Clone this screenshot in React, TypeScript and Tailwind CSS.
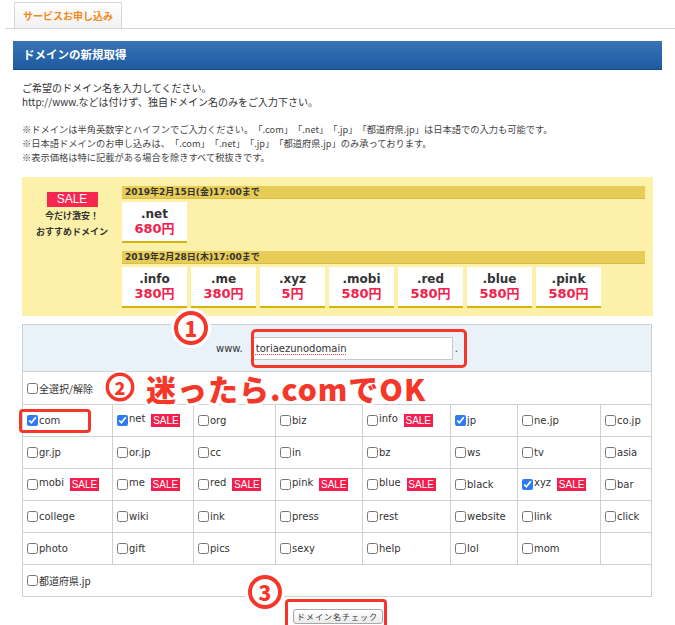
import React from 'react';

type Tld = { name: string; checked?: boolean; sale?: boolean };

const rows: Tld[][] = [
  [
    { name: 'com', checked: true },
    { name: 'net', checked: true, sale: true },
    { name: 'org' },
    { name: 'biz' },
    { name: 'info', sale: true },
    { name: 'jp', checked: true },
    { name: 'ne.jp' },
    { name: 'co.jp' },
  ],
  [
    { name: 'gr.jp' },
    { name: 'or.jp' },
    { name: 'cc' },
    { name: 'in' },
    { name: 'bz' },
    { name: 'ws' },
    { name: 'tv' },
    { name: 'asia' },
  ],
  [
    { name: 'mobi', sale: true },
    { name: 'me', sale: true },
    { name: 'red', sale: true },
    { name: 'pink', sale: true },
    { name: 'blue', sale: true },
    { name: 'black' },
    { name: 'xyz', checked: true, sale: true },
    { name: 'bar' },
  ],
  [
    { name: 'college' },
    { name: 'wiki' },
    { name: 'ink' },
    { name: 'press' },
    { name: 'rest' },
    { name: 'website' },
    { name: 'link' },
    { name: 'click' },
  ],
  [
    { name: 'photo' },
    { name: 'gift' },
    { name: 'pics' },
    { name: 'sexy' },
    { name: 'help' },
    { name: 'lol' },
    { name: 'mom' },
    { name: '' },
  ],
];

const saleCards = [
  { tld: '.info', price: '380円' },
  { tld: '.me', price: '380円' },
  { tld: '.xyz', price: '5円' },
  { tld: '.mobi', price: '580円' },
  { tld: '.red', price: '580円' },
  { tld: '.blue', price: '580円' },
  { tld: '.pink', price: '580円' },
];

const Card = ({ tld, price }: { tld: string; price: string }) => (
  <div className="flex h-[41px] w-[65px] flex-col items-center border-b-2 border-[#d9b20a] bg-white pt-[5px] font-['DejaVu_Sans','Noto_Sans_CJK_JP',sans-serif] font-bold">
    <span className="text-[12px] leading-[14px] text-[#333]">{tld}</span>
    <span className="text-[13px] leading-[16px] text-[#f2224b]">{price}</span>
  </div>
);

const DateBar = ({ children }: { children: React.ReactNode }) => (
  <div className="h-[13px] border-b border-[#d9bc45] bg-[#e8cc58] pl-[3px] font-['DejaVu_Sans','Noto_Sans_CJK_JP',sans-serif] text-[9px] font-bold leading-[13px] text-[#333]">
    {children}
  </div>
);

const Check = ({ checked }: { checked?: boolean }) => (
  <input
    type="checkbox"
    defaultChecked={checked}
    className="m-0 mr-px h-[11px] w-[11px] shrink-0 accent-[#2f7bf5]"
  />
);

const Circle = ({ n, className }: { n: string; className: string }) => (
  <div className={`absolute flex items-center justify-center rounded-full bg-white ${className}`}>
    <div className="flex h-[34px] w-[34px] items-center justify-center rounded-full border-[4px] border-[#f5372a] font-['Noto_Sans_CJK_JP',sans-serif] text-[21px] font-black leading-none text-[#f5372a]">
      {n}
    </div>
  </div>
);

export default function App() {
  return (
    <div className="relative h-[625px] w-[675px] overflow-hidden bg-white font-['Noto_Sans_CJK_JP',sans-serif] text-[#333] [text-spacing-trim:space-all]">
      {/* tab */}
      <div className="ml-[5px] flex h-[29px] items-end border-b border-[#d6d6d6]">
        <div className="ml-[9px] flex h-[26px] w-[108px] items-center justify-center border border-b-0 border-[#d6d6d6] bg-gradient-to-b from-white to-[#f2f2f2] text-[10px] font-bold text-[#f28a1e]">
          サービスお申し込み
        </div>
      </div>

      {/* header */}
      <div className="ml-[13px] mt-[12px] flex h-[29px] w-[649px] items-center border-b border-[#14498a] bg-gradient-to-b from-[#3874b6] to-[#1d5aa0] pl-[10px] text-[11.5px] font-bold text-white">
        ドメインの新規取得
      </div>

      <div className="ml-[22px] mt-[11px] text-[10px] leading-[14px]">
        <p>ご希望のドメイン名を入力してください。</p>
        <p>http://www.などは付けず、独自ドメイン名のみをご入力下さい。</p>
      </div>

      <div className="ml-[22px] mt-[13px] text-[9.25px] leading-[14px] text-[#444]">
        <p>※ドメインは半角英数字とハイフンでご入力ください。「.com」「.net」「.jp」「都道府県.jp」は日本語での入力も可能です。</p>
        <p>※日本語ドメインのお申し込みは、「.com」「.net」「.jp」「都道府県.jp」のみ承っております。</p>
        <p>※表示価格は特に記載がある場合を除きすべて税抜きです。</p>
      </div>

      {/* sale box */}
      <div className="ml-[22px] mt-[13px] flex h-[139px] w-[631px] bg-[#fdf0a9] pt-[9px]">
        <div className="flex w-[100px] flex-col items-center pt-[6px]">
          <div className="h-[15px] w-[51px] bg-[#f8274f] text-center font-['Liberation_Sans',sans-serif] text-[12px] leading-[15px] text-white">
            SALE
          </div>
          <span className="mt-[1px] text-[9px] font-bold leading-[16px]">今だけ激安！</span>
          <span className="text-[9px] font-bold leading-[16px]">おすすめドメイン</span>
        </div>
        <div className="flex w-[523px] flex-col">
          <DateBar>2019年2月15日(金)17:00まで</DateBar>
          <div className="mt-[3px] flex">
            <Card tld=".net" price="680円" />
          </div>
          <div className="mt-[8px]">
            <DateBar>2019年2月28日(木)17:00まで</DateBar>
          </div>
          <div className="mt-[3px] flex gap-[4px]">
            {saleCards.map((c) => (
              <Card key={c.tld} tld={c.tld} price={c.price} />
            ))}
          </div>
        </div>
      </div>

      {/* domain table */}
      <div className="ml-[22px] mt-[8px] w-[630px] border-l border-t border-[#d0d0d0] font-['DejaVu_Sans','Noto_Sans_CJK_JP',sans-serif] text-[10px] text-[#333]">
        <div className="flex h-[47px] items-center justify-center border-b border-r border-[#d0d0d0] bg-[#e9f1f9]">
          <span>www.</span>
          <div className="ml-[8px] flex h-[23px] w-[202px] items-center border border-[#c6c6c6] bg-white px-[4px]">
            <span className="underline decoration-[#e33] decoration-dotted underline-offset-2">toriaezunodomain</span>
          </div>
          <span className="ml-[2px]">.</span>
        </div>
        <div className="flex h-[33px] items-center border-b border-r border-[#d0d0d0] pl-[4px] font-['Noto_Sans_CJK_JP',sans-serif]">
          <Check />
          <span>全選択/解除</span>
        </div>
        <div className="grid grid-cols-[90px_81px_82px_87px_88px_67px_83px_51px]">
          {rows.flat().map((t, i) => (
            <div
              key={i}
              className="flex h-[32px] items-center border-b border-r border-[#d0d0d0] pl-[4px]"
            >
              {t.name && (
                <>
                  <Check checked={t.checked} />
                  <span className={t.sale ? '-translate-y-[2px]' : ''}>{t.name}</span>
                  {t.sale && (
                    <span className="ml-[6px] h-[13px] w-[29px] bg-[#f41e4d] text-center font-['Liberation_Sans',sans-serif] text-[10px] leading-[13px] text-white">
                      SALE
                    </span>
                  )}
                </>
              )}
            </div>
          ))}
          <div className="col-span-8 flex h-[32px] items-center border-b border-r border-[#d0d0d0] pl-[4px] font-['Noto_Sans_CJK_JP',sans-serif]">
            <Check />
            <span>都道府県.jp</span>
          </div>
        </div>
      </div>

      <div className="mt-[12px] flex w-[675px] justify-center">
        <button className="h-[15px] w-[90px] rounded-[3px] border border-[#a8a8a8] bg-gradient-to-b from-white to-[#ececec] text-[8px] leading-[13px] tracking-[1px] text-[#333]">
          ドメイン名チェック
        </button>
      </div>

      {/* annotations */}
      <div className="absolute left-[251px] top-[329px] h-[39px] w-[216px] rounded-[5px] border-[3px] border-[#f5372a]" />
      <div className="absolute left-[19px] top-[409px] h-[24px] w-[72px] rounded-[4px] border-[3px] border-[#f5372a]" />
      <div className="absolute left-[285px] top-[599px] h-[30px] w-[102px] rounded-[4px] border-[3px] border-[#f5372a]" />

      <Circle n="1" className="left-[171px] top-[308px] h-[40px] w-[40px]" />
      <Circle n="2" className="left-[101px] top-[368px] h-[38px] w-[38px] scale-[0.85]" />
      <Circle n="3" className="left-[245px] top-[572px] h-[40px] w-[40px]" />

      <div className="absolute left-[146px] top-[373px] font-['Noto_Sans_CJK_JP',sans-serif] text-[30px] font-black leading-[30px] tracking-[1px] text-[#f5372a] [-webkit-text-stroke:6px_white] [paint-order:stroke_fill]">
        迷ったら.comでOK
      </div>
    </div>
  );
}
